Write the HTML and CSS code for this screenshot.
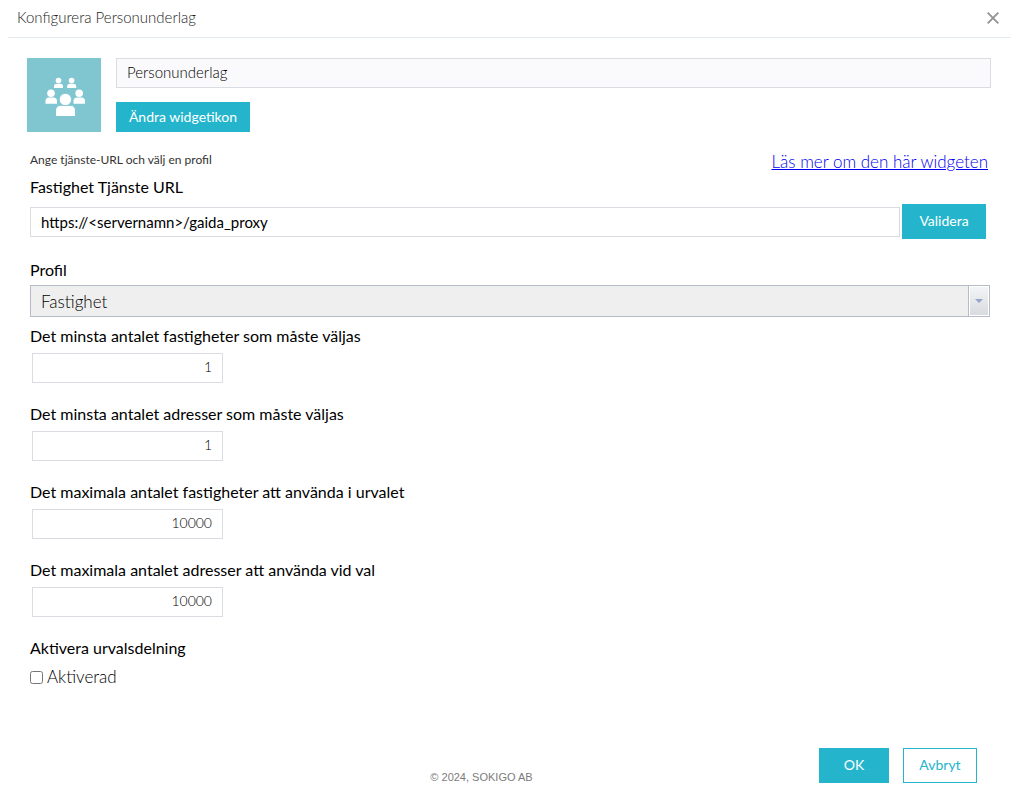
FILE: index.html
```html
<!DOCTYPE html>
<html lang="sv">
<head>
    <meta charset="UTF-8">
    <meta name="viewport" content="width=device-width, initial-scale=1.0">
    <title>Konfigurera Personunderlag</title>
    <link rel="stylesheet" href="styles.css">
</head>
<body>
    <div class="dialog">
        <header class="dialog-header">
            <h1>Konfigurera Personunderlag</h1>
            <button class="close-btn" type="button" aria-label="Stäng">
                <svg width="12" height="12" viewBox="0 0 12 12">
                    <path d="M0.7 0.7 L11.3 11.3 M11.3 0.7 L0.7 11.3" stroke="#929292" stroke-width="1.8" fill="none"/>
                </svg>
            </button>
        </header>

        <div class="widget-row">
            <svg class="widget-icon" width="74" height="74" viewBox="0 0 74 74">
                <rect width="74" height="74" fill="#80c6d1"/>
                <g fill="#fff">
                    <circle cx="31.5" cy="22.5" r="2.8"/>
                    <path d="M27 30v-1.5q0-2.7 2.7-2.7h3.6q2.7 0 2.7 2.7v1.5z"/>
                    <circle cx="44.6" cy="22.5" r="2.8"/>
                    <path d="M40.2 30v-1.5q0-2.7 2.7-2.7h3.6q2.7 0 2.7 2.7v1.5z"/>
                    <circle cx="24" cy="35.3" r="3.8"/>
                    <path d="M18.5 45.7v-2.7q0-3.5 3.5-3.5h4.5q3.5 0 3.5 3.5v2.7z"/>
                    <circle cx="52.2" cy="35.3" r="3.8"/>
                    <path d="M46.5 45.7v-2.7q0-3.5 3.5-3.5h4.5q3.5 0 3.5 3.5v2.7z"/>
                </g>
                <g fill="#fff" stroke="#80c6d1" stroke-width="1">
                    <path d="M28.5 58.5v-5.5q0-5.7 5.5-5.7h9q5.5 0 5.5 5.7v5.5z"/>
                    <circle cx="38.4" cy="41.5" r="6.2"/>
                </g>
            </svg>
            <div class="widget-fields">
                <input class="text-input name-input" type="text" value="Personunderlag" aria-label="Namn">
                <button class="btn btn-small" type="button">Ändra widgetikon</button>
            </div>
        </div>

        <form class="settings">
            <div class="intro">
                <p>Ange tjänste-URL och välj en profil</p>
                <a href="#">Läs mer om den här widgeten</a>
            </div>

            <label class="label" for="service-url">Fastighet Tjänste URL</label>
            <div class="url-row">
                <input class="text-input" type="text" id="service-url" value="https://&lt;servernamn&gt;/gaida_proxy">
                <button class="btn" type="button">Validera</button>
            </div>

            <label class="label" for="profile">Profil</label>
            <div class="select-box">
                <select id="profile">
                    <option>Fastighet</option>
                </select>
                <span class="select-arrow"></span>
            </div>

            <label class="label" for="min-properties">Det minsta antalet fastigheter som måste väljas</label>
            <input class="text-input number-input" type="text" id="min-properties" value="1">

            <label class="label" for="min-addresses">Det minsta antalet adresser som måste väljas</label>
            <input class="text-input number-input" type="text" id="min-addresses" value="1">

            <label class="label" for="max-properties">Det maximala antalet fastigheter att använda i urvalet</label>
            <input class="text-input number-input" type="text" id="max-properties" value="10000">

            <label class="label" for="max-addresses">Det maximala antalet adresser att använda vid val</label>
            <input class="text-input number-input" type="text" id="max-addresses" value="10000">

            <h2 class="label">Aktivera urvalsdelning</h2>
            <label class="check-row"><input type="checkbox">Aktiverad</label>
        </form>

        <footer class="dialog-footer">
            <p class="copyright">© 2024, SOKIGO AB</p>
            <div class="actions">
                <button class="btn" type="button">OK</button>
                <button class="btn btn-outline" type="button">Avbryt</button>
            </div>
        </footer>
    </div>
</body>
</html>
```
FILE: styles.css
```css
* {
    box-sizing: border-box;
}

body {
    margin: 0;
    background-color: #fff;
    color: #000;
    font-family: Lato, "Liberation Sans", sans-serif;
    font-size: 17px;
    font-weight: 300;
}

h1, h2, p {
    margin: 0;
}

input, select, button {
    font-family: inherit;
    font-size: 14px;
    color: inherit;
    border-radius: 0;
}

.dialog-header {
    display: flex;
    justify-content: space-between;
    align-items: center;
    height: 38px;
    margin: 0 7px 0 8px;
    padding: 0 12px 2px 9px;
    border-bottom: 1px solid #e3ebf2;
}

.dialog-header h1 {
    font-size: 15px;
    font-weight: 300;
    line-height: 20px;
    padding-bottom: 2px;
    color: #1c1c1c;
}

.close-btn {
    display: flex;
    padding: 0;
    border: none;
    background: none;
    cursor: pointer;
}

.widget-row {
    display: flex;
    gap: 15px;
    padding: 20px 27px 0;
}

.widget-icon {
    flex-shrink: 0;
}

.widget-fields {
    display: flex;
    flex: 1;
    flex-direction: column;
    align-items: flex-start;
    gap: 14px;
}

.text-input {
    height: 30px;
    padding: 0 10px;
    border: 1px solid #d9dce0;
    background-color: #fff;
    font-size: 15px;
}

.name-input {
    width: 100%;
    padding-bottom: 3px;
    background-color: #fafafc;
    font-weight: 300;
}

.btn {
    min-width: 84px;
    height: 35px;
    padding: 0 10px 2px;
    border: 1px solid #24b5cc;
    background-color: #24b5cc;
    color: #fff;
    cursor: pointer;
}

.btn-small {
    min-width: 134px;
    height: 30px;
}

.settings {
    display: flex;
    flex-direction: column;
    padding: 20px 28px 0 30px;
}

.intro {
    display: flex;
    justify-content: space-between;
    height: 24px;
    padding-right: 2px;
}

.intro p {
    font-size: 12px;
    font-weight: 400;
    line-height: 16px;
    color: #333;
}

.intro a {
    line-height: 20px;
    color: #0000ee;
}

.label {
    padding-bottom: 2px;
    font-size: 16px;
    font-weight: 400;
    line-height: 22px;
}

.url-row {
    display: flex;
    align-items: center;
    gap: 2px;
    margin: 4px 4px 20px 0;
}

.url-row .text-input {
    flex: 1;
}

.select-box {
    position: relative;
    height: 32px;
    margin: 2px 0 8px;
}

.select-box select {
    appearance: none;
    width: 100%;
    height: 100%;
    padding: 0 32px 0 10px;
    border: 1px solid #b5bcc7;
    background-color: #efefef;
    font-size: 17px;
    font-weight: 300;
}

/* drop-down button at the right end of the select */
.select-arrow {
    position: absolute;
    top: 1px;
    right: 1px;
    bottom: 1px;
    display: flex;
    justify-content: center;
    align-items: center;
    width: 20px;
    border: 1px solid #fff;
    background: linear-gradient(#f3f4f5, #d8dbdf);
    box-shadow: -1px 0 #b5bcc7;
    pointer-events: none;
}

.select-arrow::after {
    content: "";
    border: 4px solid transparent;
    border-top-color: #94a6cb;
    border-bottom: none;
}

.number-input {
    width: 191px;
    margin: 4px 0 20px 2px;
    padding-bottom: 3px;
    font-size: 14px;
    font-weight: 300;
    text-align: right;
}

.check-row {
    display: flex;
    align-items: center;
    gap: 4px;
    margin-top: 4px;
    line-height: 24px;
}

.check-row input {
    width: 13px;
    height: 13px;
    margin: 0;
}

.dialog-footer {
    display: grid;
    grid-template-columns: 1fr auto 1fr;
    margin-top: 59px;
    padding-right: 41px;
}

.copyright {
    grid-column: 2;
    align-self: end;
    padding-right: 14px;
    font-family: "Liberation Sans", sans-serif;
    font-size: 11px;
    font-weight: 400;
    line-height: 12px;
    color: #7b7b7b;
}

.actions {
    display: flex;
    justify-content: flex-end;
    gap: 14px;
}

.actions .btn {
    min-width: 70px;
}

.actions .btn-outline {
    min-width: 74px;
    background-color: #fff;
    color: #24b5cc;
}
```
